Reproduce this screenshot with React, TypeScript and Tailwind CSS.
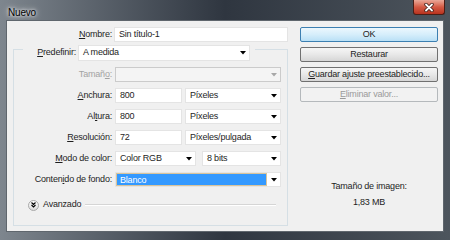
import React from "react";

// Small black down triangle used by the combo boxes
function Arrow({ disabled = false }: { disabled?: boolean }) {
  return (
    <svg width="6" height="4" viewBox="0 0 6 4" className="shrink-0">
      <polygon points="0,0 6,0 3,3.5" fill={disabled ? "#a8a8a8" : "#000"} />
    </svg>
  );
}

function Combo({
  value,
  width,
  disabled = false,
  selected = false,
}: {
  value?: string;
  width: string;
  disabled?: boolean;
  selected?: boolean;
}) {
  return (
    <div
      className={`${width} h-[15px] flex items-center border ${
        disabled ? "border-[#cbcbcb] bg-[#f4f4f4]" : "border-[#e4e4e4] bg-white"
      }`}
    >
      {selected ? (
        <div className="flex-1 h-full bg-[#3399ff] border border-[#d8c49c] text-white pl-[3px] leading-[13px]">
          {value}
        </div>
      ) : (
        <div className="flex-1 pl-[4px] leading-[13px] text-[#1e1e1e]">{value}</div>
      )}
      <div className="w-[13px] flex justify-center">
        <Arrow disabled={disabled} />
      </div>
    </div>
  );
}

function Field({ value, width }: { value: string; width: string }) {
  return (
    <div className={`${width} h-[15px] border border-[#e4e4e4] bg-white pl-[4px] leading-[13px] text-[#1e1e1e]`}>
      {value}
    </div>
  );
}

function Label({ children, disabled = false }: { children: React.ReactNode; disabled?: boolean }) {
  return (
    <div className={`w-[98px] text-right leading-[15px] ${disabled ? "text-[#a3a3a3]" : "text-[#1e1e1e]"}`}>
      {children}
    </div>
  );
}

const U = ({ children }: { children: React.ReactNode }) => (
  <span className="underline underline-offset-[1px]">{children}</span>
);

function Button({
  children,
  primary = false,
  disabled = false,
}: {
  children: React.ReactNode;
  primary?: boolean;
  disabled?: boolean;
}) {
  let cls = "border-[#707070] bg-gradient-to-b from-[#f6f6f6] via-[#e8e8e8] to-[#d6d6d6] text-[#1e1e1e]";
  if (primary) cls = "border-[#3c7fb1] bg-gradient-to-b from-[#ecf7fd] via-[#d6eefb] to-[#b9e0f6] text-[#1e1e1e]";
  if (disabled) cls = "border-[#b5b9bc] bg-[#f2f2f2] text-[#9a9a9a]";
  return (
    <div className={`h-[15px] rounded-[2px] border ${cls} flex items-center justify-center leading-[13px]`}>
      {children}
    </div>
  );
}

export default function App() {
  return (
    <div className="w-[450px] h-[240px] flex flex-col overflow-hidden bg-gradient-to-r from-[#7e868e] via-[#2f3640] to-[#4d555d] font-['Liberation_Sans',Arial,sans-serif] text-[9px] tracking-[-0.2px]">
      {/* Title bar */}
      <div className="h-[20px] flex items-start justify-between">
        <span className="ml-[8px] mt-[5px] text-[10px] text-black [text-shadow:0_0_6px_#fff,0_0_3px_#fff]">
          Nuevo
        </span>
        <div className="mr-[5px] w-[32px] h-[15px] rounded-b-[3px] border border-t-0 border-[#4a1e16] bg-gradient-to-b from-[#e9a898] via-[#d45a44] to-[#b8321e] flex items-center justify-center">
          <svg width="10" height="9" viewBox="0 0 10 9">
            <path d="M2 1.5 L8 7.5 M8 1.5 L2 7.5" stroke="#3a1a14" strokeWidth="3.4" strokeLinecap="round" />
            <path d="M2 1.5 L8 7.5 M8 1.5 L2 7.5" stroke="#fff" strokeWidth="1.8" strokeLinecap="round" />
          </svg>
        </div>
      </div>

      {/* Client area */}
      <div className="flex-1 mx-[6px] mb-[8px] border border-[#5f666d] bg-[#f0f0f0] flex">
        {/* Left column */}
        <div className="w-[281px] pl-[6px] pt-[6px] flex flex-col">
          <div className="flex h-[15px]">
            <div className="w-[99px] text-right leading-[15px] text-[#1e1e1e]">
              <U>N</U>ombre:
            </div>
            <div className="ml-[2px]">
              <Field value="Sin título-1" width="w-[174px]" />
            </div>
          </div>

          <div className="mt-[7px] w-[275px] h-[177px] border border-[#d5dfe5] flex flex-col">
            <div className="-mt-[5px] ml-[9px] w-[232px] h-[16px] bg-[#f0f0f0] flex items-center justify-end pr-[5px]">
              <span className="mr-[2px] text-[#1e1e1e]">
                <U>P</U>redefinir:
              </span>
              <div className="w-[172px] h-[16px] border border-[#e4e4e4] bg-white flex items-center">
                <div className="flex-1 pl-[4px] text-[#1e1e1e]">A medida</div>
                <div className="w-[13px] flex justify-center">
                  <Arrow />
                </div>
              </div>
            </div>

            <div className="mt-[6px] flex h-[15px]">
              <Label disabled>
                Tamañ<U>o</U>:
              </Label>
              <div className="ml-[3px]">
                <Combo width="w-[166px]" disabled />
              </div>
            </div>

            <div className="mt-[6px] flex h-[15px]">
              <Label>
                <U>A</U>nchura:
              </Label>
              <div className="ml-[3px] flex gap-[3px]">
                <Field value="800" width="w-[67px]" />
                <Combo value="Píxeles" width="w-[96px]" />
              </div>
            </div>

            <div className="mt-[6px] flex h-[15px]">
              <Label>
                Al<U>t</U>ura:
              </Label>
              <div className="ml-[3px] flex gap-[3px]">
                <Field value="800" width="w-[67px]" />
                <Combo value="Píxeles" width="w-[96px]" />
              </div>
            </div>

            <div className="mt-[6px] flex h-[15px]">
              <Label>
                <U>R</U>esolución:
              </Label>
              <div className="ml-[3px] flex gap-[3px]">
                <Field value="72" width="w-[67px]" />
                <Combo value="Píxeles/pulgada" width="w-[96px]" />
              </div>
            </div>

            <div className="mt-[6px] flex h-[15px]">
              <Label>
                <U>M</U>odo de color:
              </Label>
              <div className="ml-[3px] flex gap-[6px]">
                <Combo value="Color RGB" width="w-[81px]" />
                <Combo value="8 bits" width="w-[79px]" />
              </div>
            </div>

            <div className="mt-[6px] flex h-[15px]">
              <Label>
                Conten<U>i</U>do de fondo:
              </Label>
              <div className="ml-[3px]">
                <Combo value="Blanco" width="w-[166px]" selected />
              </div>
            </div>

            <div className="mt-[12px] h-[12px] flex items-center pl-[14px] pr-[11px]">
              <div className="w-[11px] h-[11px] rounded-full border border-[#a9a9a9] bg-gradient-to-b from-white to-[#dcdcdc] flex items-center justify-center">
                <svg width="5" height="6" viewBox="0 0 5 6">
                  <path d="M0.5 0.5 L2.5 2.5 L4.5 0.5 M0.5 3 L2.5 5 L4.5 3" stroke="#000" strokeWidth="1.1" fill="none" />
                </svg>
              </div>
              <span className="ml-[4px] text-[#1e1e1e]">Avanzado</span>
              <div className="flex-1 ml-[4px] border-t border-[#d5d5d5] border-b border-b-white" />
            </div>
          </div>
        </div>

        {/* Right column */}
        <div className="ml-[12px] w-[138px] pt-[6px] flex flex-col gap-[5px]">
          <Button primary>OK</Button>
          <Button>Restaurar</Button>
          <Button>
            <U>G</U>uardar ajuste preestablecido...
          </Button>
          <Button disabled>
            <U>E</U>liminar valor...
          </Button>
          <div className="mt-[73px] text-center leading-[12px] text-[#1e1e1e]">Tamaño de imagen:</div>
          <div className="-mt-[1px] text-center leading-[12px] text-[#1e1e1e]">1,83 MB</div>
        </div>
      </div>
    </div>
  );
}
